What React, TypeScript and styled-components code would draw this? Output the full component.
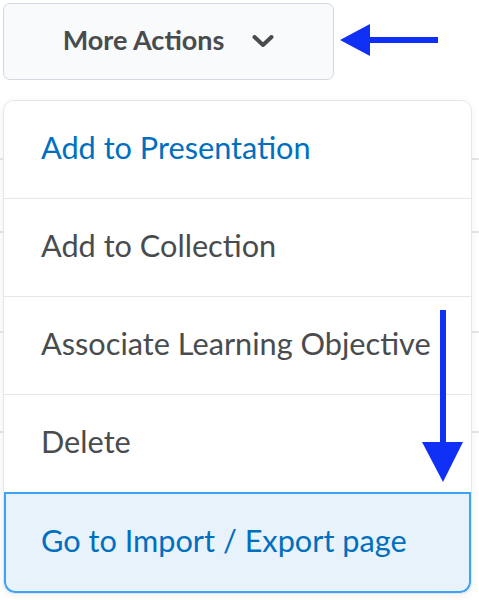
import styled, { createGlobalStyle } from "styled-components";

const GlobalStyle = createGlobalStyle`
  html, body {
    margin: 0;
    padding: 0;
    background: #ffffff;
    font-family: Lato, "Open Sans", sans-serif;
  }
`;

const items = [
  { label: "Add to Presentation", link: true },
  { label: "Add to Collection", link: false },
  { label: "Associate Learning Objective", link: false },
  { label: "Delete", link: false },
  { label: "Go to Import / Export page", link: true, active: true },
];

export default function App() {
  return (
    <>
      <GlobalStyle />
      <Page>
        <Toolbar>
          <ActionsButton>
            More Actions
            <svg width="22" height="12" viewBox="0 0 22 12">
              <path d="M2.5 2 L11 10 L19.5 2" fill="none" stroke="#494c4e" strokeWidth="4" strokeLinecap="round" strokeLinejoin="round" />
            </svg>
          </ActionsButton>
          <svg width="100" height="34" viewBox="0 0 100 34">
            <polygon points="0,16 30,0 30,32" fill="#1030f5" />
            <rect x="28" y="13" width="70" height="6" fill="#1030f5" />
          </svg>
        </Toolbar>
        <Content>
          <BackRow $height={60} />
          <BackRow $height={73} />
          <BackRow $height={100} />
          <BackRow $height={100} />
          <Menu>
            {items.map((item) => (
              <MenuItem key={item.label} $link={item.link} $active={item.active}>
                {item.label}
              </MenuItem>
            ))}
          </Menu>
          <DownArrow width="44" height="174" viewBox="0 0 44 174">
            <rect x="18" y="0" width="6" height="136" fill="#1030f5" />
            <polygon points="0,132 41,132 21,172" fill="#1030f5" />
          </DownArrow>
        </Content>
      </Page>
    </>
  );
}

const Page = styled.div`
  width: 479px;
  height: 600px;
  overflow: hidden;
  padding: 3px 0 0 3px;
  box-sizing: border-box;
`;

const Toolbar = styled.div`
  display: flex;
  align-items: center;
  gap: 6px;
  height: 77px;
  svg {
    margin-top: -2px;
  }
`;

const ActionsButton = styled.button`
  width: 331px;
  height: 77px;
  display: flex;
  align-items: center;
  justify-content: center;
  gap: 28px;
  background: #f9fafb;
  border: 1.5px solid #d3d9e3;
  border-radius: 7px;
  color: #494c4e;
  font-family: Lato, "Open Sans", sans-serif;
  font-size: 27px;
  font-weight: 700;
  padding: 0 0 4px 0;
  box-sizing: border-box;
  svg {
    margin-top: 2px;
  }
`;

const Content = styled.div`
  position: relative;
  margin-top: 20px;
  margin-left: -3px;
`;

const BackRow = styled.div<{ $height: number }>`
  height: ${(p) => p.$height}px;
  border-bottom: 2px solid #e3e6ea;
  box-sizing: border-box;
`;

const Menu = styled.div`
  position: absolute;
  top: 0;
  left: 3px;
  width: 469px;
  height: 494px;
  display: flex;
  flex-direction: column;
  background: #ffffff;
  border: 1.5px solid #e3e6eb;
  border-radius: 11px;
  box-shadow: 0 2px 8px rgba(0, 0, 0, 0.06);
  box-sizing: border-box;
  overflow: hidden;
`;

const MenuItem = styled.div<{ $link: boolean; $active?: boolean }>`
  flex: 1;
  display: flex;
  align-items: center;
  padding: 0 0 4px ${(p) => (p.$active ? "35px" : "37px")};
  font-size: 30.7px;
  color: ${(p) => (p.$link ? "#006fbf" : "#494c4e")};
  background: ${(p) => (p.$active ? "#e8f2fa" : "#ffffff")};
  border-top: 1.5px solid #e3e6eb;
  ${(p) =>
    p.$active &&
    `
    border: 2px solid #3ea3f6;
    border-radius: 0 0 11px 11px;
  `}
  &:first-child {
    border-top: none;
  }
`;

const DownArrow = styled.svg`
  position: absolute;
  left: 422px;
  top: 210px;
`;
